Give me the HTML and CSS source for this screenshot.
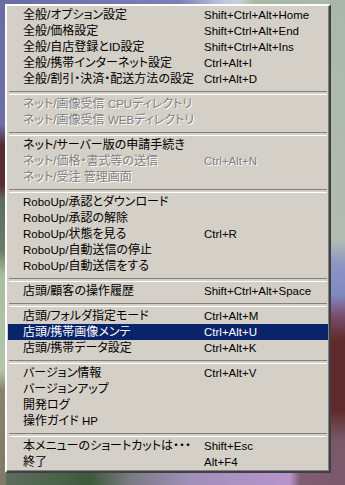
FILE: index.html
```html
<!DOCTYPE html>
<html lang="ja">
<head>
    <meta charset="UTF-8">
    <title>メニュー</title>
    <link rel="stylesheet" href="styles.css">
</head>
<body>
    <div class="menu">
        <div class="item"><span class="label">全般/オプション設定</span><span class="key">Shift+Ctrl+Alt+Home</span></div>
        <div class="item"><span class="label">全般/価格設定</span><span class="key">Shift+Ctrl+Alt+End</span></div>
        <div class="item"><span class="label">全般/自店登録と<span class="lat">ID</span>設定</span><span class="key">Shift+Ctrl+Alt+Ins</span></div>
        <div class="item"><span class="label">全般/携帯インターネット設定</span><span class="key">Ctrl+Alt+I</span></div>
        <div class="item"><span class="label">全般/割引・決済・配送方法の設定</span><span class="key">Ctrl+Alt+D</span></div>
        <div class="sep"></div>
        <div class="item disabled"><span class="label">ネット/画像受信 <span class="lat">CPU</span>ディレクトリ</span></div>
        <div class="item disabled"><span class="label">ネット/画像受信 <span class="lat">WEB</span>ディレクトリ</span></div>
        <div class="sep"></div>
        <div class="item"><span class="label">ネット/サーバー版の申請手続き</span></div>
        <div class="item disabled"><span class="label">ネット/価格・書式等の送信</span><span class="key">Ctrl+Alt+N</span></div>
        <div class="item disabled"><span class="label">ネット/受注 管理画面</span></div>
        <div class="sep"></div>
        <div class="item"><span class="label"><span class="lat">RoboUp/</span>承認とダウンロード</span></div>
        <div class="item"><span class="label"><span class="lat">RoboUp/</span>承認の解除</span></div>
        <div class="item"><span class="label"><span class="lat">RoboUp/</span>状態を見る</span><span class="key">Ctrl+R</span></div>
        <div class="item"><span class="label"><span class="lat">RoboUp/</span>自動送信の停止</span></div>
        <div class="item"><span class="label"><span class="lat">RoboUp/</span>自動送信をする</span></div>
        <div class="sep"></div>
        <div class="item"><span class="label">店頭/顧客の操作履歴</span><span class="key">Shift+Ctrl+Alt+Space</span></div>
        <div class="sep"></div>
        <div class="item"><span class="label">店頭/フォルダ指定モード</span><span class="key">Ctrl+Alt+M</span></div>
        <div class="item active"><span class="label">店頭/携帯画像メンテ</span><span class="key">Ctrl+Alt+U</span></div>
        <div class="item"><span class="label">店頭/携帯データ設定</span><span class="key">Ctrl+Alt+K</span></div>
        <div class="sep"></div>
        <div class="item"><span class="label">バージョン情報</span><span class="key">Ctrl+Alt+V</span></div>
        <div class="item"><span class="label">バージョンアップ</span></div>
        <div class="item"><span class="label">開発ログ</span></div>
        <div class="item"><span class="label">操作ガイド <span class="lat">HP</span></span></div>
        <div class="sep"></div>
        <div class="item"><span class="label">本メニューのショートカットは・・・</span><span class="key">Shift+Esc</span></div>
        <div class="item"><span class="label">終了</span><span class="key">Alt+F4</span></div>
    </div>
</body>
</html>
```

FILE: styles.css
```css
* {
    margin: 0;
    padding: 0;
    box-sizing: border-box;
}

html, body {
    width: 345px;
    height: 485px;
    overflow: hidden;
}

body {
    font-family: "Liberation Sans", "Noto Sans CJK JP", sans-serif;
    font-size: 12px;
    font-feature-settings: "palt";
    color: #000;
    padding: 4px 0 0 5px;
    background:
        linear-gradient(to bottom, #6a6ca4 0, #6e70a6 125px, #5a2a32 145px, #5c2c34 185px, #5e6c5e 200px, #6a7c68 250px, #a8bea0 275px, #b4c6aa 370px, #8a8272 390px, #807868 485px) left top / 6px 100% no-repeat,
        linear-gradient(to bottom, #aab6ac 0, #b2bcb2 240px, #8c94c4 265px, #8088c0 295px, #7a5070 315px, #602a2c 340px, #5e2a2c 410px, #7a5868 440px, #7c5a6c 485px) right top / 14px 100% no-repeat,
        linear-gradient(to right, #6a6ca4 0, #7c80b4 180px, #c4c6de 225px, #c8d0d4 240px, #a8b8a2 255px, #aab8a8 345px) left top / 100% 6px no-repeat,
        linear-gradient(to right, #5e6e5e 0, #4a624a 60px, #3c5a3c 90px, #7a7a82 130px, #a090b8 190px, #b694cc 290px, #7e5e70 300px, #7c5a6c 345px) left bottom / 100% 13px no-repeat,
        #8a8a9a;
}

.menu {
    width: 326px;
    background: #d4d0c8;
    border-style: solid;
    border-width: 2px;
    border-color: #fff #404040 #404040 #fff;
    box-shadow: inset -1px -1px 0 #808080, inset 1px 1px 0 #d4d0c8;
    padding: 1px;
}

.item {
    display: flex;
    align-items: center;
    height: 16px;
    line-height: 16px;
    padding-left: 15px;
    white-space: nowrap;
}

.label {
    flex: none;
    width: 181px;
}

.lat,
.key {
    font-size: 11.5px;
}

.key {
    flex: none;
}

.item.disabled {
    color: #808080;
    text-shadow: 1px 1px 0 #fff;
}

.item.active {
    background: #0a246a;
    color: #fff;
}

.sep {
    height: 9px;
    padding-top: 4px;
    margin: 0 1px;
}

.sep::before {
    content: "";
    display: block;
    height: 2px;
    border-top: 1px solid #808080;
    border-bottom: 1px solid #fff;
}
```
